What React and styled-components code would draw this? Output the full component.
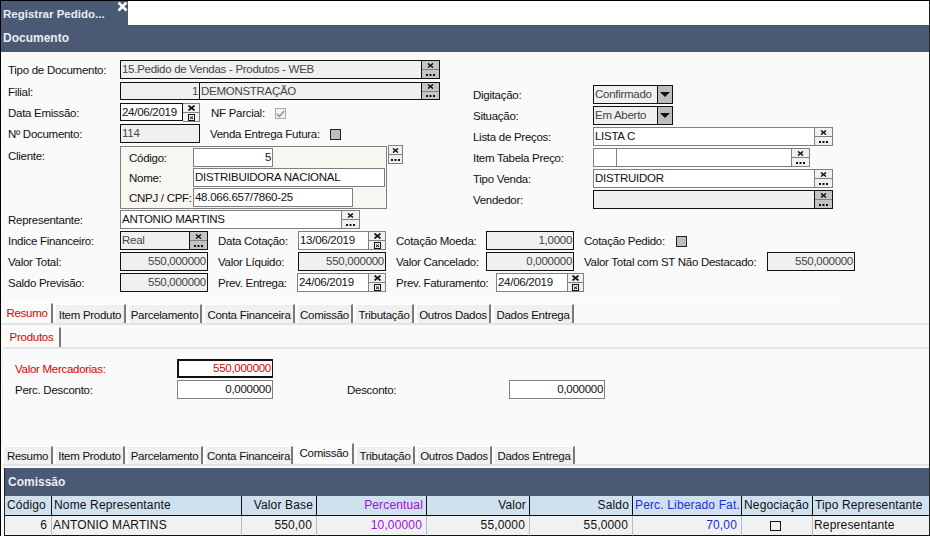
import React from 'react';
import styled, { createGlobalStyle } from 'styled-components';

const Global = createGlobalStyle`
  html, body { margin: 0; padding: 0; width: 930px; height: 536px; overflow: hidden; background: #fafafa; }
  * { box-sizing: border-box; }
`;

const Page = styled.div`
  width: 930px;
  height: 536px;
  border-left: 1px solid #000;
  border-top: 1px solid #000;
  border-right: 1px solid #222;
  background: #fafafa;
  font-family: "Liberation Sans", Arial, sans-serif;
  font-size: 11.5px;
  letter-spacing: -0.28px;
  color: #111;
  overflow: hidden;
  display: flex;
  flex-direction: column;
`;

const TabStrip = styled.div`
  height: 24px;
  background: #fff;
  flex: none;
`;

const TitleTab = styled.div`
  position: relative;
  width: 127px;
  height: 24px;
  background: #4a5a75;
  color: #e8edf3;
  font-weight: 700;
  font-size: 11.5px;
  letter-spacing: 0;
  line-height: 24px;
  padding: 1px 0 0 2px;
`;

const CloseIcon = styled.svg`
  position: absolute;
  top: 1px;
  right: 0;
`;

const SectionBar = styled.div`
  height: ${p => p.$h}px;
  flex: none;
  background: #4a5a75;
  color: #e8edf3;
  font-weight: 700;
  font-size: 12px;
  letter-spacing: 0;
  line-height: ${p => p.$h}px;
  padding-left: ${p => p.$pad}px;
`;

const Form = styled.div`
  flex: none;
  height: 248px;
  padding: 8px 0 0 7px;
`;

const Upper = styled.div`
  display: flex;
  height: 150px;
`;

const LeftCol = styled.div`
  width: 465px;
  flex: none;
  display: grid;
  grid-template-rows: 22px 21px 21px 21px 65px;
`;

const RightCol = styled.div`
  flex: none;
  padding-top: 25px;
  display: grid;
  grid-auto-rows: 21px;
  align-content: start;
`;

const Row = styled.div`
  display: flex;
  align-items: flex-start;
  height: ${p => p.$h || 21}px;
`;

const Label = styled.div`
  flex: none;
  width: ${p => p.$w}px;
  margin-left: ${p => p.$ml || 0}px;
  height: 19px;
  line-height: ${p => p.$lh || 20}px;
  color: ${p => p.$color || '#111'};
  white-space: nowrap;
`;

const Field = styled.div`
  flex: none;
  width: ${p => p.$w}px;
  height: ${p => p.$h || 19}px;
  border: 1px solid ${p => (p.$off || p.$dark ? '#111' : '#808080')};
  border-width: ${p => (p.$bold ? '2px 1px 2px 2px' : '1px')};
  background: ${p => (p.$off ? '#f0f0f0' : '#fff')};
  color: ${p => p.$color || (p.$off ? '#444' : '#111')};
  text-align: ${p => (p.$right ? 'right' : 'left')};
  line-height: ${p => (p.$bold ? 15 : 16)}px;
  padding: 0 1px;
  white-space: nowrap;
  overflow: hidden;
`;

const Split = styled(Field)`
  border-left-width: 0;
`;

const ButtonPair = styled.div`
  flex: none;
  width: ${p => p.$w || 18}px;
  height: ${p => p.$h || 19}px;
  border: 1px solid ${p => (p.$off ? '#111' : '#808080')};
  border-left-width: 0;
  display: flex;
  flex-direction: column;
  background: #f0f0f0;
`;

const ButtonHalf = styled.div`
  flex: 1;
  display: flex;
  align-items: center;
  justify-content: center;
  background: ${p => (p.$off ? '#c4c4c4' : '#f0f0f0')};
  & + & { border-top: 1px solid ${p => (p.$off ? '#111' : '#808080')}; }
`;

const Check = styled.div`
  flex: none;
  width: 11px;
  height: 11px;
  margin: 5px 0 0 ${p => p.$ml || 0}px;
  border: 1px solid ${p => p.$line || '#222'};
  background: ${p => p.$bg || '#bdbdbd'};
  display: flex;
  align-items: center;
  justify-content: center;
`;

const ClientBox = styled.div`
  position: relative;
  flex: none;
  width: 267px;
  height: 63px;
  margin-top: 1px;
  border: 1px solid #808080;
  background: #f7f6f1;
  padding: 1px 0 0 8px;
  display: grid;
  grid-auto-rows: 20px;
`;

const ClientRow = styled.div`
  display: flex;
  align-items: flex-start;
`;

const ClientLabel = styled.div`
  width: 64px;
  flex: none;
  line-height: 21px;
  white-space: nowrap;
`;

const ClientButton = styled(ButtonPair)`
  border-left-width: 1px;
  margin-left: 1px;
`;

const DropArrow = styled.div`
  flex: none;
  width: 16px;
  height: 19px;
  border: 1px solid #111;
  margin-left: -1px;
  background: #bdbdbd;
  display: flex;
  align-items: center;
  justify-content: center;
`;

const Triangle = styled.div`
  width: 0;
  height: 0;
  border-left: 5px solid transparent;
  border-right: 5px solid transparent;
  border-top: 5px solid #111;
`;

const Lower = styled.div`
  display: grid;
  grid-auto-rows: 21px;
`;

const WhiteRule = styled.div`
  height: 1px;
  width: 825px;
  margin: 8px 0 0 4px;
  background: #fff;
`;

const Tabs = styled.div`
  display: flex;
  height: ${p => p.$h}px;
  margin-left: ${p => p.$ml}px;
  align-items: flex-end;
  gap: 2px;
  flex: none;
`;

const Tab = styled.div`
  flex: none;
  width: ${p => p.$w}px;
  height: ${p => p.$active ? p.$activeH || 20 : p.$height || 19}px;
  background: ${p => (p.$active ? '#fafafa' : '#f0f0f0')};
  border-top: 1px solid #fff;
  border-left: 1px solid #fff;
  border-right: 2px solid #7a7a7a;
  color: ${p => p.$color || '#111'};
  text-align: center;
  line-height: ${p => p.$lh || 20}px;
  white-space: nowrap;
`;

const TabRule = styled.div`
  height: 2px;
  flex: none;
  margin-left: ${p => p.$ml || 0}px;
  background: #e4e4e4;
`;

const Values = styled.div`
  flex: none;
  height: 96px;
  padding: 10px 0 0 2px;
  margin-left: 1px;
  border-left: 1px solid #eee;
  display: grid;
  grid-auto-rows: 21px;
`;

const Panel = styled.div`
  flex: 1;
  margin: 2px 0 0 3px;
  border-left: 1px solid #222;
  display: flex;
  flex-direction: column;
  min-height: 0;
`;

const Table = styled.div`
  display: grid;
  grid-template-columns: 47px 190px 75px 110px 103px 103px 109px 71px 117px;
  font-size: 12px;
  letter-spacing: 0.15px;
`;

const HeadCell = styled.div`
  height: 20px;
  background: #cfe0ee;
  border-right: 1px solid #111;
  border-bottom: 1px solid #111;
  line-height: 19px;
  padding: 0 ${p => (p.$align === 'right' ? 3 : 0)}px 0 2px;
  text-align: ${p => p.$align || 'left'};
  color: ${p => p.$color || '#111'};
  white-space: nowrap;
  overflow: hidden;
`;

const BodyCell = styled.div`
  height: 20px;
  background: #f0f1f3;
  border-right: 1px solid #bbb;
  border-bottom: 1px solid #111;
  line-height: 19px;
  padding: 0 4px 0 1px;
  text-align: ${p => p.$align || 'left'};
  color: ${p => p.$color || '#111'};
  white-space: nowrap;
  display: ${p => (p.$center ? 'flex' : 'block')};
  align-items: center;
  justify-content: center;
`;

const TableBox = styled.div`
  width: 11px;
  height: 10px;
  border: 1px solid #111;
  background: #f0f1f3;
`;

const X = ({ big }) => (
  <svg width={big ? 9 : 7} height={big ? 6 : 5} viewBox="0 0 7 5">
    <path d="M1 0.5 L6 4.5 M6 0.5 L1 4.5" stroke="#111" strokeWidth="1.5" fill="none" />
  </svg>
);
const Dots = () => (
  <svg width="9" height="3" viewBox="0 0 9 3">
    <path d="M0 1h2v2H0zM3.500 1h2v2h-2zM7 1h2v2H7z" fill="#111" />
  </svg>
);
const CalMark = () => (
  <svg width="7" height="7" viewBox="0 0 7 7">
    <rect x="0.5" y="0.5" width="6" height="6" fill="none" stroke="#111" />
    <path d="M2 2.500 L5 5 M5 2.500 L2 5" stroke="#111" />
  </svg>
);

const Lookup = ({ off, w, h }) => (
  <ButtonPair $off={off} $w={w} $h={h}>
    <ButtonHalf $off={off}><X /></ButtonHalf>
    <ButtonHalf $off={off}><Dots /></ButtonHalf>
  </ButtonPair>
);
const DateButton = ({ w = 17 }) => (
  <ButtonPair $w={w}>
    <ButtonHalf><X big /></ButtonHalf>
    <ButtonHalf><CalMark /></ButtonHalf>
  </ButtonPair>
);

const mainTabs = [
  ['Resumo', 51, '#e00000'], ['Item Produto', 71], ['Parcelamento', 74], ['Conta Financeira', 91],
  ['Comissão', 56], ['Tributação', 59], ['Outros Dados', 75], ['Dados Entrega', 81],
];
const lowerTabs = [
  ['Resumo', 50], ['Item Produto', 70], ['Parcelamento', 76], ['Conta Financeira', 88],
  ['Comissão', 59], ['Tributação', 59], ['Outros Dados', 75], ['Dados Entrega', 81],
];

export default function App() {
  return (
    <Page>
      <Global />
      <TabStrip>
        <TitleTab>
          Registrar Pedido...
          <CloseIcon width="11" height="10" viewBox="0 0 11 10">
            <path d="M1.500 0.500 L9.500 8.500 M9.500 0.500 L1.500 8.500" stroke="#fff" strokeWidth="2.600" />
          </CloseIcon>
        </TitleTab>
      </TabStrip>
      <SectionBar $h={27} $pad={2}>Documento</SectionBar>
      <Form>
        <Upper>
          <LeftCol>
            <Row>
              <Label $w={112} $lh={21}>Tipo de Documento:</Label>
              <Field $off $w={302}>15.Pedido de Vendas - Produtos - WEB</Field>
              <Lookup off />
            </Row>
            <Row>
              <Label $w={112}>Filial:</Label>
              <Field $off $right $w={80} $h={18}>1</Field>
              <Split $off $w={222} $h={18}>DEMONSTRAÇÃO</Split>
              <Lookup off h={18} />
            </Row>
            <Row>
              <Label $w={112} $lh={21}>Data Emissão:</Label>
              <Field $dark $w={63} $h={18}>24/06/2019</Field>
              <DateButton />
              <Label $w={64} $ml={11}>NF Parcial:</Label>
              <Check $line="#aaa" $bg="#f2f2f2">
                <svg width="9" height="8" viewBox="0 0 9 8"><path d="M1 4 L3.500 6.500 L8 1" stroke="#999" strokeWidth="1.800" fill="none" /></svg>
              </Check>
            </Row>
            <Row>
              <Label $w={112}>Nº Documento:</Label>
              <Field $off $w={80}>114</Field>
              <Label $w={120} $ml={10}>Venda Entrega Futura:</Label>
              <Check />
            </Row>
            <Row $h={64}>
              <Label $w={112} $lh={22}>Cliente:</Label>
              <ClientBox>
                <ClientRow>
                  <ClientLabel>Código:</ClientLabel>
                  <Field $right $w={80}>5</Field>
                </ClientRow>
                <ClientRow>
                  <ClientLabel>Nome:</ClientLabel>
                  <Field $w={192}>DISTRIBUIDORA NACIONAL</Field>
                </ClientRow>
                <ClientRow>
                  <ClientLabel>CNPJ / CPF:</ClientLabel>
                  <Field $w={160}>48.066.657/7860-25</Field>
                </ClientRow>
              </ClientBox>
              <ClientButton $w={15}>
                <ButtonHalf><X /></ButtonHalf>
                <ButtonHalf><Dots /></ButtonHalf>
              </ClientButton>
            </Row>
          </LeftCol>
          <RightCol>
            <Row>
              <Label $w={120}>Digitação:</Label>
              <Field $off $w={65} $h={19}>Confirmado</Field>
              <DropArrow><Triangle /></DropArrow>
            </Row>
            <Row>
              <Label $w={120}>Situação:</Label>
              <Field $off $w={65} $h={19}>Em Aberto</Field>
              <DropArrow><Triangle /></DropArrow>
            </Row>
            <Row>
              <Label $w={120}>Lista de Preços:</Label>
              <Field $w={222}>LISTA C</Field>
              <Lookup />
            </Row>
            <Row>
              <Label $w={120}>Item Tabela Preço:</Label>
              <Field $w={24}></Field>
              <Split $w={175}></Split>
              <Lookup />
            </Row>
            <Row>
              <Label $w={120}>Tipo Venda:</Label>
              <Field $w={222}>DISTRUIDOR</Field>
              <Lookup />
            </Row>
            <Row>
              <Label $w={120}>Vendedor:</Label>
              <Field $off $w={222}></Field>
              <Lookup off />
            </Row>
          </RightCol>
        </Upper>
        <Lower>
          <Row>
            <Label $w={112}>Representante:</Label>
            <Field $w={222}>ANTONIO MARTINS</Field>
            <Lookup />
          </Row>
          <Row>
            <Label $w={112}>Indice Financeiro:</Label>
            <Field $off $w={70}>Real</Field>
            <Lookup off />
            <Label $w={80} $ml={10}>Data Cotação:</Label>
            <Field $w={71}>13/06/2019</Field>
            <DateButton />
            <Label $w={90} $ml={10}>Cotação Moeda:</Label>
            <Field $off $right $w={88}>1,0000</Field>
            <Label $w={92} $ml={10}>Cotação Pedido:</Label>
            <Check />
          </Row>
          <Row>
            <Label $w={112}>Valor Total:</Label>
            <Field $off $right $w={88}>550,000000</Field>
            <Label $w={80} $ml={10}>Valor Líquido:</Label>
            <Field $off $right $w={88}>550,000000</Field>
            <Label $w={90} $ml={10}>Valor Cancelado:</Label>
            <Field $off $right $w={88}>0,000000</Field>
            <Label $w={183} $ml={10}>Valor Total com ST Não Destacado:</Label>
            <Field $off $right $w={88}>550,000000</Field>
          </Row>
          <Row>
            <Label $w={112}>Saldo Previsão:</Label>
            <Field $off $right $w={88}>550,000000</Field>
            <Label $w={79} $ml={10}>Prev. Entrega:</Label>
            <Field $w={72}>24/06/2019</Field>
            <DateButton />
            <Label $w={100} $ml={10}>Prev. Faturamento:</Label>
            <Field $w={72}>24/06/2019</Field>
            <DateButton w={16} />
          </Row>
        </Lower>
        <WhiteRule />
      </Form>
      <Tabs $h={23} $ml={1}>
        {mainTabs.map(([t, w, c], i) => (
          <Tab key={t} $w={w} $color={c} $active={i === 0} $lh={i === 0 ? 18 : 20}>{t}</Tab>
        ))}
      </Tabs>
      <TabRule />
      <Tabs $h={22} $ml={2}>
        <Tab $w={58} $color="#e00000" $active $lh={19}>Produtos</Tab>
      </Tabs>
      <TabRule $ml={2} />
      <Values>
        <Row>
          <Label $w={162} $ml={10} $color="#e00000">Valor Mercadorias:</Label>
          <Field $bold $dark $right $w={96} $color="#e00000">550,000000</Field>
        </Row>
        <Row>
          <Label $w={162} $ml={10}>Perc. Desconto:</Label>
          <Field $right $w={96}>0,000000</Field>
          <Label $w={162} $ml={74}>Desconto:</Label>
          <Field $right $w={96}>0,000000</Field>
        </Row>
      </Values>
      <Tabs $h={19} $ml={2}>
        {lowerTabs.map(([t, w], i) => (
          <Tab key={t} $w={w} $height={18} $activeH={21} $active={i === 4} $lh={i === 4 ? 18 : 19}>{t}</Tab>
        ))}
      </Tabs>
      <TabRule $ml={2} />
      <Panel>
        <SectionBar $h={28} $pad={3}>Comissão</SectionBar>
        <Table>
          <HeadCell>Código</HeadCell>
          <HeadCell>Nome Representante</HeadCell>
          <HeadCell $align="right">Valor Base</HeadCell>
          <HeadCell $align="right" $color="#a010e0">Percentual</HeadCell>
          <HeadCell $align="right">Valor</HeadCell>
          <HeadCell $align="right">Saldo</HeadCell>
          <HeadCell $color="#1a30e0">Perc. Liberado Fat.</HeadCell>
          <HeadCell>Negociação</HeadCell>
          <HeadCell>Tipo Representante</HeadCell>
          <BodyCell $align="right">6</BodyCell>
          <BodyCell>ANTONIO MARTINS</BodyCell>
          <BodyCell $align="right">550,00</BodyCell>
          <BodyCell $align="right" $color="#a010e0">10,00000</BodyCell>
          <BodyCell $align="right">55,0000</BodyCell>
          <BodyCell $align="right">55,0000</BodyCell>
          <BodyCell $align="right" $color="#1a30e0">70,00</BodyCell>
          <BodyCell $center><TableBox /></BodyCell>
          <BodyCell>Representante</BodyCell>
        </Table>
      </Panel>
    </Page>
  );
}
